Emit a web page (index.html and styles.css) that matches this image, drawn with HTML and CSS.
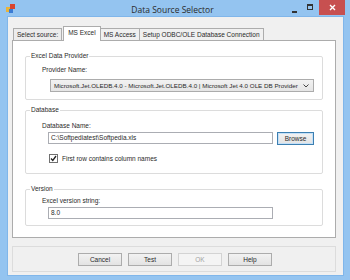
FILE: index.html
```html
<!DOCTYPE html>
<html lang="en">

<head>
    <meta charset="UTF-8">
    <meta name="viewport" content="width=device-width, initial-scale=1.0">
    <title>Data Source Selector</title>
    <link rel="stylesheet" href="styles.css">
</head>

<body>
    <div class="window">
        <!-- Заголовок окна -->
        <div class="titlebar">
            <div class="app-icon">
                <svg width="9" height="9" viewBox="0 0 9 9">
                    <rect x="0" y="3" width="5" height="5" fill="#e8b43a"/>
                    <rect x="4" y="0" width="5" height="5" fill="#d9452f"/>
                    <rect x="3" y="5" width="4" height="4" fill="#3b7bd4"/>
                </svg>
            </div>
            <div class="title">Data Source Selector</div>
            <div class="controls">
                <span class="ctl-min"></span>
                <span class="ctl-max"></span>
                <span class="ctl-close">
                    <svg width="7" height="7" viewBox="0 0 7 7">
                        <path d="M1 1 L6 6 M6 1 L1 6" stroke="#ffffff" stroke-width="1.4"/>
                    </svg>
                </span>
            </div>
        </div>

        <div class="client">
            <!-- Вкладки -->
            <div class="tabs">
                <div class="tab tab-label">Select source:</div>
                <div class="tab tab-active">MS Excel</div>
                <div class="tab">MS Access</div>
                <div class="tab">Setup ODBC/OLE Database Connection</div>
            </div>

            <div class="panel">
                <fieldset class="group group-provider">
                    <legend>Excel Data Provider</legend>
                    <div class="field">
                        <div class="label lbl-provider">Provider Name:</div>
                        <div class="combo">
                            <span>Microsoft.Jet.OLEDB.4.0 - Microsoft.Jet.OLEDB.4.0 | Microsoft Jet 4.0 OLE DB Provider</span>
                            <svg width="6" height="4" viewBox="0 0 6 4">
                                <path d="M0.5 0.5 L3 3 L5.5 0.5" stroke="#444" fill="none" stroke-width="1"/>
                            </svg>
                        </div>
                    </div>
                </fieldset>

                <fieldset class="group group-db">
                    <legend>Database</legend>
                    <div class="field">
                        <div class="label lbl-db">Database Name:</div>
                        <div class="row">
                            <div class="textbox">C:\Softpediatest\Softpedia.xls</div>
                            <div class="button button-default">Browse</div>
                        </div>
                        <div class="check-row">
                            <span class="checkbox">
                                <svg width="7" height="7" viewBox="0 0 7 7">
                                    <path d="M1 3.5 L2.8 5.5 L6 1" stroke="#222" fill="none" stroke-width="1.3"/>
                                </svg>
                            </span>
                            <span>First row contains column names</span>
                        </div>
                    </div>
                </fieldset>

                <fieldset class="group group-version">
                    <legend>Version</legend>
                    <div class="field">
                        <div class="label lbl-version">Excel version string:</div>
                        <div class="textbox">8.0</div>
                    </div>
                </fieldset>
            </div>

            <div class="button-bar">
                <div class="button">Cancel</div>
                <div class="button">Test</div>
                <div class="button button-disabled">OK</div>
                <div class="button">Help</div>
            </div>
        </div>
    </div>
</body>

</html>
```

FILE: styles.css
```css
body {
    margin: 0;
    padding: 0;
    font-family: "Liberation Sans", Arial, sans-serif;
    font-size: 6.5px;
    color: #2a2a2a;
}

.window {
    width: 350px;
    height: 280px;
    box-sizing: border-box;
    background-color: #94c4f0;
    padding: 0 7px 5px 8px;
    display: flex;
    flex-direction: column;
}

.titlebar {
    height: 17px;
    display: grid;
    grid-template-columns: 1fr auto 1fr;
    align-items: center;
    margin: 0 -2px 0 -8px;
}

.app-icon {
    padding-left: 6px;
    display: flex;
    align-items: center;
}

.title {
    font-family: "Open Sans", "Noto Sans", sans-serif;
    font-size: 8.5px;
    color: #2b2b2b;
    padding-top: 2px;
}

.controls {
    display: flex;
    justify-content: flex-end;
    align-self: stretch;
    align-items: flex-start;
}

.ctl-min {
    width: 5px;
    height: 2px;
    background-color: #333;
    margin: 11px 10px 0 0;
}

.ctl-max {
    width: 4px;
    height: 3px;
    border: 1px solid #333;
    border-top-width: 2px;
    margin: 4px 6px 0 0;
}

.ctl-close {
    width: 26px;
    height: 15px;
    background-color: #c75050;
    display: flex;
    align-items: center;
    justify-content: center;
}

.client {
    flex: 1;
    background-color: #f0f0f0;
    box-shadow: 0 0 0 1px #80b6ea;
    padding: 10px 7px 3px 4px;
    display: flex;
    flex-direction: column;
}

.tabs {
    display: flex;
    align-items: flex-end;
    height: 13px;
    margin-left: 1px;
}

.tab {
    height: 11px;
    line-height: 11px;
    padding: 0 3px;
    border: 1px solid #acacac;
    border-bottom: none;
    background-color: #f0f0f0;
    margin-left: -1px;
    white-space: nowrap;
}

.tab-label {
    margin-left: 0;
    margin-right: 2px;
    background-color: #ececec;
}

.tab-active {
    height: 14px;
    line-height: 12px;
    background-color: #ffffff;
    margin-bottom: -1px;
    position: relative;
    z-index: 1;
    padding: 0 4px;
}

.panel {
    height: 198px;
    box-sizing: border-box;
    background-color: #ffffff;
    border: 1px solid #acacac;
    padding-top: 11px;
}

.group {
    margin: 0 12px;
    border: 1px solid #dcdcdc;
    border-radius: 2px;
    padding: 0 8px 0 4px;
}

.group legend {
    padding: 0 1px;
    line-height: 8px;
}

.group-provider {
    padding-bottom: 7px;
}

.group-db {
    margin-top: 6px;
    padding-bottom: 10px;
}

.group-version {
    margin-top: 11px;
    padding-bottom: 6px;
}

.field {
    padding-left: 12px;
}

.label {
    line-height: 8px;
}

.lbl-provider {
    margin-top: 6px;
}

.lbl-db {
    margin-top: 8px;
}

.lbl-version {
    margin-top: 4px;
}

.combo {
    margin: 5px 0 0 8px;
    height: 13px;
    box-sizing: border-box;
    border: 1px solid #acacac;
    background: linear-gradient(#f2f2f2, #e5e5e5);
    display: flex;
    align-items: center;
    justify-content: space-between;
    gap: 3px;
    padding: 0 4px 0 3px;
    font-size: 6.25px;
    white-space: nowrap;
}

.row {
    display: flex;
    align-items: flex-start;
    margin-top: 2px;
}

.textbox {
    width: 225px;
    height: 12px;
    box-sizing: border-box;
    border: 1px solid #abadb3;
    background-color: #ffffff;
    line-height: 10px;
    padding-left: 2px;
    margin-left: 6px;
}

.group-version .textbox {
    margin-top: 2px;
}

.button {
    width: 44px;
    height: 13px;
    box-sizing: border-box;
    border: 1px solid #acacac;
    background: linear-gradient(#f2f2f2, #e3e3e3);
    text-align: center;
    line-height: 11px;
}

.row .button {
    width: 37px;
    margin-left: 4px;
}

.button-default {
    border-color: #3c7fb1;
    box-shadow: inset 0 0 0 1px #c4e0f8;
}

.button-disabled {
    color: #a3a3a3;
    border-color: #d3d3d3;
    background: #f4f4f4;
}

.check-row {
    display: flex;
    align-items: center;
    gap: 4px;
    margin: 8px 0 0 7px;
    height: 10px;
}

.checkbox {
    width: 9px;
    height: 9px;
    box-sizing: border-box;
    border: 1px solid #707070;
    background-color: #ffffff;
    display: flex;
    align-items: center;
    justify-content: center;
}

.button-bar {
    margin-top: 8px;
    height: 26px;
    box-sizing: border-box;
    border: 1px solid #dcdcdc;
    display: flex;
    justify-content: center;
    align-items: center;
    gap: 6px;
    padding-left: 2px;
}
```
